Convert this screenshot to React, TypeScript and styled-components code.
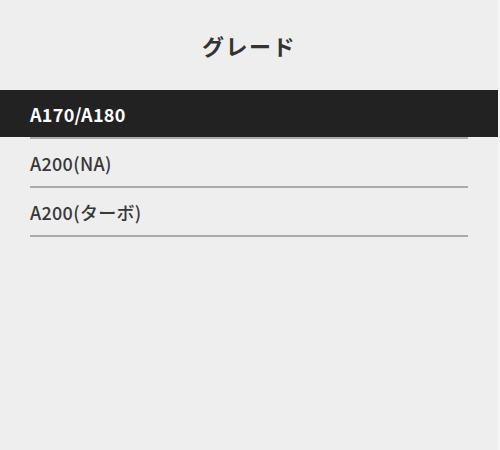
import React, { useState } from 'react';
import styled, { createGlobalStyle } from 'styled-components';

const GlobalStyle = createGlobalStyle`
  html, body {
    margin: 0;
    padding: 0;
    background: #f4f4f4;
  }
  body {
    font-family: "Noto Sans CJK JP", "Noto Sans", sans-serif;
  }
`;

const grades = ['A170/A180', 'A200(NA)', 'A200(ターボ)'];

const Panel = styled.div`
  width: 498px;
  height: 450px;
  background: #eeeeee;
  display: flex;
  flex-direction: column;
`;

const Title = styled.h2`
  margin: 0;
  height: 90px;
  display: flex;
  align-items: center;
  justify-content: center;
  font-size: 22px;
  font-weight: 700;
  color: #333333;
  letter-spacing: 1.5px;
`;

const List = styled.ul`
  list-style: none;
  margin: 0;
  padding: 0;
`;

const Item = styled.li<{ $active: boolean }>`
  background: ${({ $active }) => ($active ? '#222222' : 'transparent')};
  cursor: pointer;
`;

const ItemLabel = styled.div<{ $active: boolean }>`
  margin: 0 30px;
  height: 47px;
  display: flex;
  align-items: center;
  font-size: 18px;
  letter-spacing: 0.3px;
  font-weight: ${({ $active }) => ($active ? 700 : 500)};
  color: ${({ $active }) => ($active ? '#ffffff' : '#383838')};
`;

const Divider = styled.div`
  margin: 0 30px;
  height: 2px;
  background: #aaaaaa;
`;

export default function App() {
  const [selected, setSelected] = useState(0);

  return (
    <>
      <GlobalStyle />
      <Panel>
        <Title>グレード</Title>
        <List>
          {grades.map((g, i) => (
            <React.Fragment key={g}>
              <Item $active={i === selected} onClick={() => setSelected(i)}>
                <ItemLabel $active={i === selected}>{g}</ItemLabel>
              </Item>
              <Divider />
            </React.Fragment>
          ))}
        </List>
      </Panel>
    </>
  );
}
